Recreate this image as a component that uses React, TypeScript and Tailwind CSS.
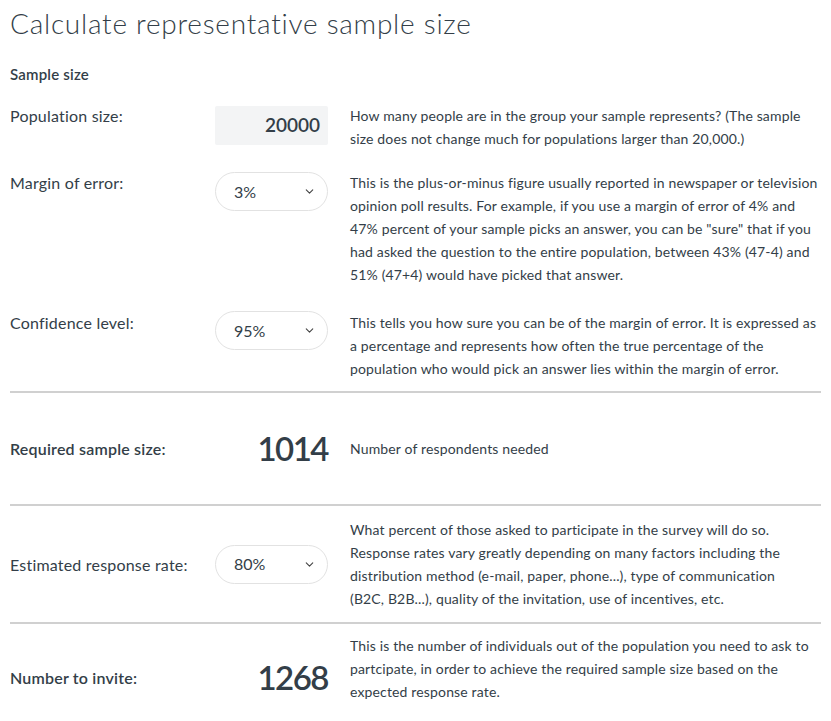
import { ChevronDown } from "lucide-react";

function Select({ value }: { value: string }) {
  return (
    <div className="flex h-[39px] w-[113px] items-center justify-between rounded-full border border-[#e2e2e2] bg-white pl-[18px] pr-[11px] text-[16px] text-[#333e48]">
      <span>{value}</span>
      <ChevronDown size={13} strokeWidth={2} className="text-[#444]" />
    </div>
  );
}

function Desc({ children, className = "" }: { children: React.ReactNode; className?: string }) {
  return (
    <p className={`text-[14px] leading-[23px] tracking-[0.15px] text-[#333e48] ${className}`}>
      {children}
    </p>
  );
}

const row = "grid grid-cols-[183px_113px_1fr] gap-x-[22px]";
const label = "text-[16px] leading-[23px] tracking-[0.2px]";
const big = "text-right text-[33px] font-semibold leading-none tracking-[-1.5px]";

export default function App() {
  return (
    <div className="w-[831px] bg-white px-[10px] font-['Lato',sans-serif] text-[#333e48]">
      <h1 className="pt-[6px] text-[28px] font-light leading-[34px] tracking-[0.75px]">
        Calculate representative sample size
      </h1>
      <h2 className="mt-[24px] text-[15px] font-semibold leading-[20px] tracking-[0.2px]">
        Sample size
      </h2>

      <div className={`${row} pt-[20px] pb-[11px]`}>
        <div className={label}>Population size:</div>
        <div className="mt-[2px] flex h-[39px] items-center justify-end rounded-[2px] bg-[#f3f4f5] pr-[8px] text-[19px] font-semibold">
          20000
        </div>
        <Desc>
          How many people are in the group your sample represents? (The sample size does not change much for populations larger than 20,000.)
        </Desc>

        <div className={`${label} mt-[21px]`}>Margin of error:</div>
        <div className="mt-[22px]">
          <Select value="3%" />
        </div>
        <div className="mt-[21px]">
          <Desc>
            This is the plus-or-minus figure usually reported in newspaper or television opinion poll results. For example, if you use a margin of error of 4% and 47% percent of your sample picks an answer, you can be "sure" that if you had asked the question to the entire population, between 43% (47-4) and 51% (47+4) would have picked that answer.
          </Desc>
        </div>

        <div className={`${label} mt-[25px]`}>Confidence level:</div>
        <div className="mt-[25px]">
          <Select value="95%" />
        </div>
        <div className="mt-[25px]">
          <Desc>
            This tells you how sure you can be of the margin of error. It is expressed as a percentage and represents how often the true percentage of the population who would pick an answer lies within the margin of error.
          </Desc>
        </div>
      </div>

      <div className="h-[2px] bg-[#d0d0d0]" />

      <div className={`${row} h-[111px] items-center`}>
        <div className={`${label} font-semibold`}>Required sample size:</div>
        <div className={big}>1014</div>
        <Desc>Number of respondents needed</Desc>
      </div>

      <div className="h-[2px] bg-[#d0d0d0]" />

      <div className={`${row} h-[116px] items-center`}>
        <div className={label}>Estimated response rate:</div>
        <Select value="80%" />
        <Desc className="max-w-[455px]">
          What percent of those asked to participate in the survey will do so. Response rates vary greatly depending on many factors including the distribution method (e-mail, paper, phone...), type of communication (B2C, B2B...), quality of the invitation, use of incentives, etc.
        </Desc>
      </div>

      <div className="h-[2px] bg-[#d0d0d0]" />

      <div className={`${row} items-end pt-[10px] pb-[12px]`}>
        <div className={`${label} pb-[14px] font-semibold`}>Number to invite:</div>
        <div className={`${big} pb-[9px]`}>1268</div>
        <Desc>
          This is the number of individuals out of the population you need to ask to partcipate, in order to achieve the required sample size based on the expected response rate.
        </Desc>
      </div>
    </div>
  );
}
